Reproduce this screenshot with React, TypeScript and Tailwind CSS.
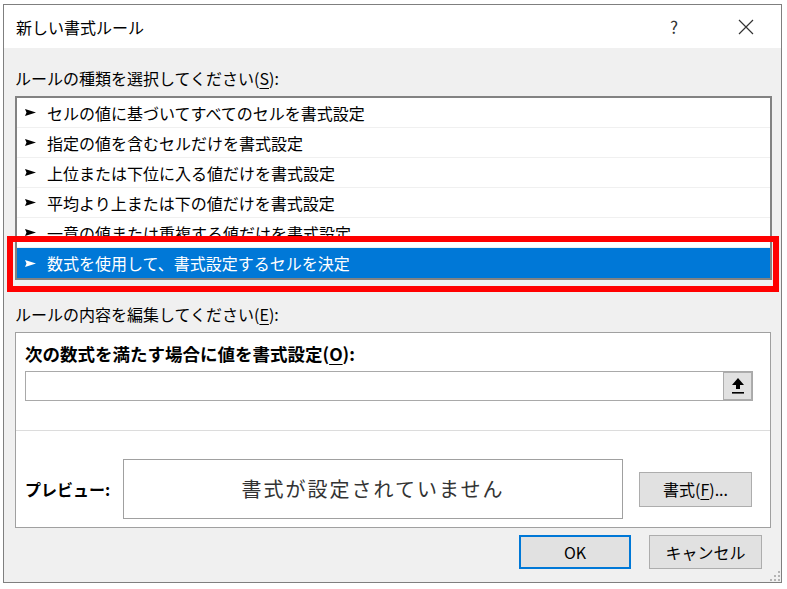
import React from "react";

const rules = [
  "セルの値に基づいてすべてのセルを書式設定",
  "指定の値を含むセルだけを書式設定",
  "上位または下位に入る値だけを書式設定",
  "平均より上または下の値だけを書式設定",
  "一意の値または重複する値だけを書式設定",
  "数式を使用して、書式設定するセルを決定",
];

function Pointer({ white }: { white?: boolean }) {
  return (
    <svg width="11" height="7" viewBox="0 0 11 7" className="shrink-0">
      <polygon points="0,0 11,3.5 0,7 1.5,3.5" fill={white ? "#ffffff" : "#000000"} />
    </svg>
  );
}

function Key({ k }: { k: string }) {
  return <span className="underline underline-offset-[3px] decoration-1">{k}</span>;
}

export default function App() {
  return (
    <div className="relative h-[589px] w-[787px] overflow-hidden bg-white pl-[3px] pt-[4px] font-['Noto_Sans_CJK_JP',sans-serif] text-black">
      <div className="flex h-[579px] w-[779px] flex-col border border-[#7f7f7f] bg-[#f0f0f0]">
        {/* title bar */}
        <div className="flex h-[43px] items-center bg-white pl-[12px]">
          <span className="text-[16px] leading-[20px]">新しい書式ルール</span>
          <span className="ml-auto mr-[60px] text-[17px] leading-[20px] text-[#333]">?</span>
          <svg width="16" height="16" viewBox="0 0 16 16" className="mr-[27px]">
            <path d="M1 1 L15 15 M15 1 L1 15" stroke="#333" strokeWidth="1.2" />
          </svg>
        </div>

        <div className="flex flex-col px-[11px]">
          <div className="mt-[16px] text-[16px] leading-[28px]">
            ルールの種類を選択してください(<Key k="S" />):
          </div>

          <div className="mt-[4px] h-[184px] w-[757px] border-2 border-[#828282] bg-white">
            {rules.map((r, i) => {
              const sel = i === rules.length - 1;
              return (
                <div
                  key={r}
                  className={`flex h-[30px] items-center gap-[11px] pl-[8px] text-[16px] leading-[30px] ${
                    sel ? "bg-[#0078d7] text-white" : "border-b border-[#f0f0f0]"
                  }`}
                >
                  <Pointer white={sel} />
                  <span>{r}</span>
                </div>
              );
            })}
          </div>

          <div className="mt-[20px] text-[16px] leading-[28px]">
            ルールの内容を編集してください(<Key k="E" />):
          </div>

          <div className="mt-[4px] flex h-[196px] w-[756px] flex-col border border-[#a0a0a0] bg-white">
            <div className="mt-[7px] pl-[9px] text-[17.5px] font-bold leading-[28px]">
              次の数式を満たす場合に値を書式設定(<Key k="O" />):
            </div>
            <div className="ml-[9px] mt-[3px] flex h-[30px] w-[728px] border border-[#a9a9a9]">
              <div className="flex-1" />
              <div className="flex w-[29px] items-center justify-center border border-[#adadad] bg-[#e1e1e1]">
                <svg width="14" height="18" viewBox="0 0 14 18">
                  <polygon points="7,1 13,8 9,8 9,12 5,12 5,8 1,8" fill="#000" />
                  <rect x="1" y="15" width="12" height="1.6" fill="#000" />
                </svg>
              </div>
            </div>
            <div className="mt-[29px] h-px w-full bg-[#dcdcdc]" />
            <div className="mt-[28px] flex items-center pl-[9px]">
              <span className="w-[98px] text-[16px] font-bold leading-[28px]">プレビュー:</span>
              <div className="flex h-[60px] w-[500px] items-center justify-center border border-[#a0a0a0] text-[20px] tracking-[2px] text-[#333]">
                書式が設定されていません
              </div>
              <button className="ml-[16px] h-[35px] w-[113px] border border-[#adadad] bg-[#e1e1e1] text-[16px]">
                書式(<Key k="F" />)...
              </button>
            </div>
          </div>

          <div className="mt-[7px] flex justify-end gap-[18px] pr-[8px]">
            <button className="h-[34px] w-[112px] border-2 border-[#0078d7] bg-[#e1e1e1] text-[16px]">
              OK
            </button>
            <button className="h-[34px] w-[113px] border border-[#adadad] bg-[#e1e1e1] text-[16px]">
              キャンセル
            </button>
          </div>
        </div>
      </div>

      {/* resize grip */}
      <svg width="10" height="10" viewBox="0 0 10 10" className="absolute left-[770px] top-[571px]">
        <rect x="8" y="0" width="2" height="2" fill="#b4b4b4" />
        <rect x="4" y="4" width="2" height="2" fill="#b4b4b4" />
        <rect x="8" y="4" width="2" height="2" fill="#b4b4b4" />
        <rect x="0" y="8" width="2" height="2" fill="#b4b4b4" />
        <rect x="4" y="8" width="2" height="2" fill="#b4b4b4" />
        <rect x="8" y="8" width="2" height="2" fill="#b4b4b4" />
      </svg>

      {/* highlight annotation */}
      <div className="absolute left-[7px] top-[236px] h-[56px] w-[772px] border-[6px] border-[#ff0000]" />
    </div>
  );
}
